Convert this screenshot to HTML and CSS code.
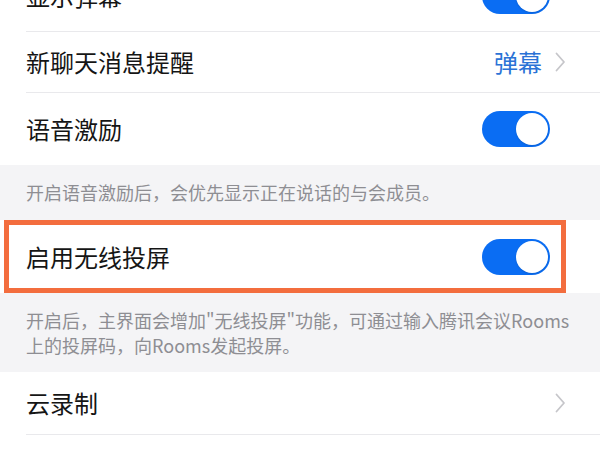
FILE: index.html
```html
<!DOCTYPE html>
<html lang="zh-CN">
<head>
<meta charset="utf-8">
<title>设置</title>
<link rel="stylesheet" href="styles.css">
</head>
<body>
<div class="screen">
  <div class="group">
    <div class="row">
      <div class="row-inner row-top">
        <span class="label">显示弹幕</span>
        <span class="switch"><span class="knob"></span></span>
      </div>
    </div>
    <div class="row">
      <div class="row-inner row-msg">
        <span class="label">新聊天消息提醒</span>
        <span class="value">弹幕<svg class="chev" width="11" height="20" viewBox="0 0 11 20"><path d="M1.5 1.5 L9 10 L1.5 18.5" fill="none" stroke="#c6c6ca" stroke-width="1.8" stroke-linecap="round" stroke-linejoin="round"/></svg></span>
      </div>
    </div>
    <div class="row">
      <div class="row-inner row-voice no-line">
        <span class="label">语音激励</span>
        <span class="switch"><span class="knob"></span></span>
      </div>
    </div>
  </div>
  <p class="note note-one">开启语音激励后，会优先显示正在说话的与会成员。</p>
  <div class="group">
    <div class="row highlighted">
      <div class="row-inner row-cast no-line">
        <span class="label">启用无线投屏</span>
        <span class="switch"><span class="knob"></span></span>
      </div>
      <div class="mark"></div>
    </div>
  </div>
  <p class="note note-two">开启后，主界面会增加"无线投屏"功能，可通过输入腾讯会议Rooms<br>上的投屏码，向Rooms发起投屏。</p>
  <div class="group">
    <div class="row">
      <div class="row-inner row-cloud">
        <span class="label">云录制</span>
        <svg class="chev" width="11" height="20" viewBox="0 0 11 20"><path d="M1.5 1.5 L9 10 L1.5 18.5" fill="none" stroke="#c6c6ca" stroke-width="1.8" stroke-linecap="round" stroke-linejoin="round"/></svg>
      </div>
    </div>
    <div class="row">
      <div class="row-inner row-blank no-line"></div>
    </div>
  </div>
</div>
</body>
</html>
```
FILE: styles.css
```css
* { box-sizing: border-box; }
html, body {
  margin: 0;
  padding: 0;
  background: #f4f4f6;
  overflow: hidden;
}
body {
  font-family: "Noto Sans CJK SC", "Noto Sans", sans-serif;
  width: 600px;
  height: 450px;
}
.screen {
  display: flex;
  flex-direction: column;
}
.group {
  background: #ffffff;
}
.row {
  padding-left: 26px;
  background: #ffffff;
  position: relative;
}
.row-inner {
  display: flex;
  align-items: center;
  justify-content: space-between;
  padding-right: 34px;
  border-bottom: 1px solid #e9e9ec;
}
.row-inner.no-line { border-bottom: none; }
.row-top { height: 72px; margin-top: -40px; }
.row-msg { height: 61px; }
.row-voice { height: 72px; }
.row-cast { height: 73px; }
.row-cloud { height: 63px; }
.row-blank { height: 16px; }
.label {
  font-size: 24px;
  color: #151515;
  line-height: 30px;
}
.value {
  display: flex;
  align-items: center;
  gap: 13px;
  font-size: 24px;
  color: #2b73d6;
  line-height: 30px;
}
.chev { display: block; }
.switch {
  width: 68px;
  height: 36px;
  border-radius: 18px;
  background: #0a6df3;
  margin-right: 16px;
  display: flex;
  align-items: center;
  justify-content: flex-end;
  padding-right: 2px;
}
.knob {
  width: 32px;
  height: 32px;
  border-radius: 50%;
  background: #ffffff;
  box-shadow: 0 1px 2px rgba(0, 0, 0, 0.12);
}
.note {
  margin: 0;
  padding: 15px 26px;
  font-size: 18px;
  line-height: 25px;
  color: #8e8e93;
}
.note-two { padding-top: 15px; padding-bottom: 14px; }
.mark {
  position: absolute;
  left: 4px;
  top: 0;
  width: 562px;
  height: 73px;
  border: 5px solid #f36d3e;
}
```
